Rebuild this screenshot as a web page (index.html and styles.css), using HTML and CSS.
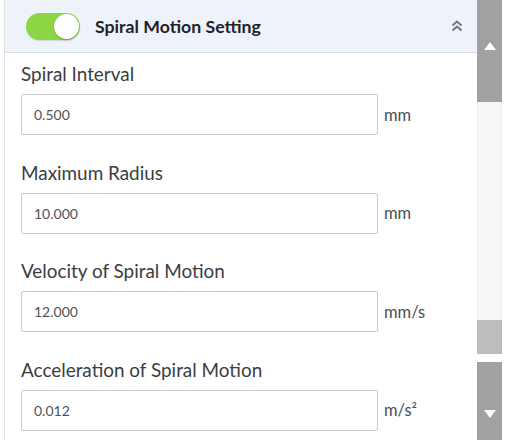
FILE: index.html
```html
<!DOCTYPE html>
<html>
<head>
<meta charset="utf-8">
<link rel="stylesheet" href="styles.css">
</head>
<body>
<div class="layout">
  <div class="panel">
    <div class="header">
      <div class="toggle"><div class="knob"></div></div>
      <div class="title">Spiral Motion Setting</div>
      <svg class="chev" width="14" height="14" viewBox="0 0 14 14"><path d="M2.5 6.5 L7 2.5 L11.5 6.5 M2.5 11.5 L7 7.5 L11.5 11.5" fill="none" stroke="#70757b" stroke-width="1.9"/></svg>
    </div>
    <div class="form">
      <div class="field">
        <div class="label">Spiral Interval</div>
        <div class="row"><div class="input">0.500</div><span class="unit">mm</span></div>
      </div>
      <div class="field">
        <div class="label">Maximum Radius</div>
        <div class="row"><div class="input">10.000</div><span class="unit">mm</span></div>
      </div>
      <div class="field">
        <div class="label">Velocity of Spiral Motion</div>
        <div class="row"><div class="input">12.000</div><span class="unit">mm/s</span></div>
      </div>
      <div class="field">
        <div class="label">Acceleration of Spiral Motion</div>
        <div class="row"><div class="input">0.012</div><span class="unit">m/s²</span></div>
      </div>
    </div>
  </div>
  <div class="scrollbar">
    <div class="seg-top"><span class="arrow-up"></span></div>
    <div class="track"></div>
    <div class="thumb"></div>
    <div class="gap"></div>
    <div class="seg-bottom"><span class="arrow-down"></span></div>
  </div>
</div>
</body>
</html>
```
FILE: styles.css
```css
html, body { margin: 0; padding: 0; background: #fff; }
body { font-family: "Lato", "Noto Sans", sans-serif; }
.layout { display: flex; height: 440px; overflow: hidden; padding-left: 4px; }
.panel { width: 472px; border-left: 1px solid #dfe2e6; }
.header {
  height: 52px; background: #eef3fa; border-bottom: 1px solid #d6dbe2;
  display: flex; align-items: center; padding-left: 21px; padding-right: 13px;
}
.toggle {
  width: 54px; height: 27px; border-radius: 14px; background: #8cd646;
  display: flex; align-items: center; justify-content: flex-end; padding-right: 1px;
  box-sizing: border-box; box-shadow: 0 1px 1px rgba(0,0,0,0.12);
}
.knob { width: 25px; height: 25px; border-radius: 50%; background: #fff; box-shadow: 0 1px 2px rgba(0,0,0,0.25); }
.title { margin-left: 15px; font-weight: 700; font-size: 17.7px; color: #1f2328; }
.chev { margin-left: auto; }
.form { padding: 7px 0 0 16px; }
.field { margin-bottom: 23.5px; }
.label { height: 28px; line-height: 28px; font-size: 18.9px; color: #3a3d42; margin-bottom: 6px; }
.row { display: flex; align-items: center; }
.input {
  width: 357px; height: 41px; box-sizing: border-box; border: 1px solid #c9c9c9; border-radius: 2px;
  padding-left: 12px; line-height: 39px; font-size: 14px; color: #505358;
}
.unit { margin-left: 6px; font-size: 16.5px; color: #4b4e53; }
.scrollbar { width: 25px; display: flex; flex-direction: column; height: 440px; }
.seg-top { height: 102px; background: #a1a1a1; display: flex; justify-content: center; padding-top: 42px; box-sizing: border-box; }
.track { height: 218px; background: #f6f6f6; border-left: 1px solid #ececec; border-right: 1px solid #ececec; box-sizing: border-box; }
.thumb { height: 34px; background: #bdbdbd; }
.gap { height: 8px; background: #fff; }
.seg-bottom { flex: 1; background: #a2a2a2; display: flex; justify-content: center; padding-top: 48px; box-sizing: border-box; }
.arrow-up { width: 0; height: 0; border-left: 6px solid transparent; border-right: 6px solid transparent; border-bottom: 8px solid #fff; }
.arrow-down { width: 0; height: 0; border-left: 6px solid transparent; border-right: 6px solid transparent; border-top: 8px solid #fff; }
```
